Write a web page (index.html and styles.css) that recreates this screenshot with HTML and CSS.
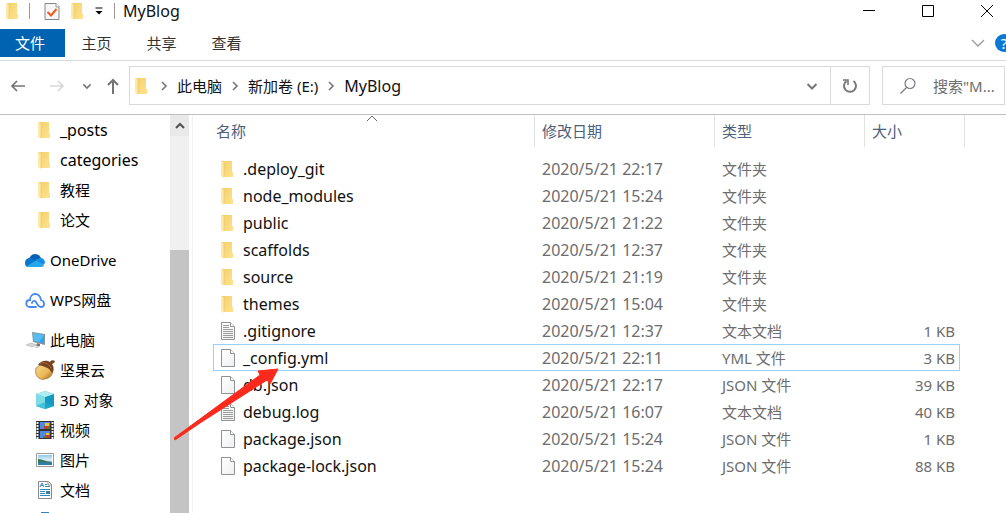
FILE: index.html
```html
<!DOCTYPE html>
<html lang="zh-CN">
<head>
<meta charset="utf-8">
<title>MyBlog</title>
<link rel="stylesheet" href="styles.css">
</head>
<body>
<svg class="defs" aria-hidden="true">
  <defs>
    <linearGradient id="gold" x1="0" y1="0" x2="1" y2="1"><stop offset="0" stop-color="#f3cf6b"/><stop offset="1" stop-color="#ffe38f"/></linearGradient>
    <linearGradient id="paper" x1="0" y1="0" x2="1" y2="1"><stop offset="0" stop-color="#fff"/><stop offset="1" stop-color="#eef0f1"/></linearGradient>
    <linearGradient id="nut" x1="0" y1="0" x2="1" y2="1"><stop offset="0" stop-color="#f8dc90"/><stop offset=".6" stop-color="#eab858"/><stop offset="1" stop-color="#a86016"/></linearGradient>
    <linearGradient id="sky" x1="0" y1="0" x2="0" y2="1"><stop offset="0" stop-color="#8cc6ee"/><stop offset=".5" stop-color="#e1f1f6"/><stop offset="1" stop-color="#286f87"/></linearGradient>
    <symbol id="folder" viewBox="0 0 14 18"><path d="M2 1h10v11h1v5H3z" fill="url(#gold)"/><path d="M1 1l3 2v15l-3-2z" fill="#ffe9a6"/><path d="M4 3v14" stroke="#e9c566" stroke-width=".6"/></symbol>
    <symbol id="file" viewBox="0 0 16 20"><path d="M1.500 1.500h9l4 4v13h-13z" fill="url(#paper)" stroke="#929292"/><path d="M10.500 1.500v4h4" fill="#fff" stroke="#929292"/></symbol>
    <symbol id="text" viewBox="0 0 16 20"><use href="#file"/><path d="M3 4.500h6M3 6.500h6M3 8.500h10M3 10.500h10M3 12.500h10M3 14.500h10M3 16.500h10" stroke="#9b9b9b"/></symbol>
    <symbol id="right" viewBox="0 0 8 10"><path d="M2 1l4 4-4 4" fill="none" stroke="#777" stroke-width="1.600"/></symbol>
    <symbol id="down" viewBox="0 0 12 10"><path d="M1.500 3l4.500 4.500L10.500 3" fill="none" stroke="currentColor" stroke-width="2"/></symbol>
  </defs>
</svg>

<div class="window">
  <header class="titlebar">
    <svg class="folder" aria-hidden="true"><use href="#folder"/></svg>
    <span class="divider gap-a"></span>
    <button class="plain gap-b" aria-label="属性"><svg width="16" height="20" viewBox="0 0 16 20"><path d="M1 2.500h11l3 3v13H1z" fill="#f5f6f7" stroke="#858585"/><path d="M12 2v4h3" fill="#fff" stroke="#999"/><path d="M3.500 11l3.500 3.500L12.500 8" fill="none" stroke="#ed5b20" stroke-width="2"/></svg></button>
    <button class="plain gap-c" aria-label="新建文件夹"><svg class="folder"><use href="#folder"/></svg></button>
    <button class="plain gap-d" aria-label="自定义"><svg width="8" height="8" viewBox="0 0 8 8"><path d="M.500 1h7" stroke="#000"/><path d="M.500 4h7L4 7.500z"/></svg></button>
    <span class="divider gap-d"></span>
    <h1 class="title latin">MyBlog</h1>
    <div class="caption-buttons">
      <button class="plain" aria-label="最小化"><svg width="14" height="14"><path d="M1 6.500h12" stroke="#000"/></svg></button>
      <button class="plain" aria-label="最大化"><svg width="14" height="14"><path d="M1.500 1.500h11v11h-11z" fill="none" stroke="#000"/></svg></button>
      <button class="plain" aria-label="关闭"><svg width="14" height="14"><path d="M1 1l12 12M13 1L1 13" stroke="#000"/></svg></button>
    </div>
  </header>

  <nav class="ribbon">
    <button class="tab active">文件</button>
    <button class="tab">主页</button>
    <button class="tab">共享</button>
    <button class="tab">查看</button>
    <button class="plain expand" aria-label="展开功能区"><svg width="14" height="10"><path d="M1 2l6 6 6-6" fill="none" stroke="#9a9a9a" stroke-width="1.300"/></svg></button>
    <button class="help" aria-label="帮助">?</button>
  </nav>

  <div class="navbar">
    <div class="arrows">
      <button class="plain" aria-label="后退"><svg width="16" height="14"><path d="M15 7H2M7 2L2 7l5 5" fill="none" stroke="#747474" stroke-width="1.700"/></svg></button>
      <button class="plain" aria-label="前进"><svg width="16" height="14"><path d="M1 7h13M9 2l5 5-5 5" fill="none" stroke="#d8d8d8" stroke-width="1.700"/></svg></button>
      <button class="plain recent" aria-label="最近的位置"><svg width="10" height="8" viewBox="0 0 12 10"><use href="#down"/></svg></button>
      <button class="plain" aria-label="上移"><svg width="14" height="18"><path d="M7 17V3M2 8l5-5 5 5" fill="none" stroke="#747474" stroke-width="2"/></svg></button>
    </div>
    <div class="address">
      <svg class="folder" aria-hidden="true"><use href="#folder"/></svg>
      <svg class="chevron" aria-hidden="true"><use href="#right"/></svg>
      <a class="crumb" href="#">此电脑</a>
      <svg class="chevron" aria-hidden="true"><use href="#right"/></svg>
      <a class="crumb" href="#">新加卷 (E:)</a>
      <svg class="chevron" aria-hidden="true"><use href="#right"/></svg>
      <a class="crumb latin" href="#">MyBlog</a>
      <button class="plain history" aria-label="以前的位置"><svg width="12" height="10"><use href="#down"/></svg></button>
      <button class="refresh" aria-label="刷新"><svg width="16" height="16"><path d="M11.500 3a6 6 0 1 1-7 0" fill="none" stroke="#777" stroke-width="2"/><path d="M1 2h5v5" fill="none" stroke="#777" stroke-width="1.600"/></svg></button>
    </div>
    <label class="search">
      <svg width="18" height="18" aria-hidden="true"><circle cx="11" cy="6.500" r="5" fill="none" stroke="#7b7b88" stroke-width="1.200"/><path d="M7.500 10.500L1.500 16.500" stroke="#7b7b88" stroke-width="1.200"/></svg>
      <input class="search-input" type="text" aria-label="搜索" placeholder='搜索"M...'>
    </label>
  </div>

  <div class="content">
    <nav class="tree">
      <div class="group">
        <a class="node child latin" href="#"><svg class="folder"><use href="#folder"/></svg>_posts</a>
        <a class="node child latin" href="#"><svg class="folder"><use href="#folder"/></svg>categories</a>
        <a class="node child" href="#"><svg class="folder"><use href="#folder"/></svg>教程</a>
        <a class="node child" href="#"><svg class="folder"><use href="#folder"/></svg>论文</a>
      </div>
      <div class="group">
        <a class="node" href="#"><svg class="icon" viewBox="0 0 20 20"><path d="M4 9C5 6 7 4 10 4c3 0 5 2 6 4l-7 5z" fill="#0860b4"/><path d="M0 13c0-3 2-5 5-5 2 0 4 1 6 3l-8 6c-2 0-3-2-3-4z" fill="#0875cf"/><path d="M10 10l5-2c3 0 5 2 5 5l-3 3z" fill="#168ee4"/><path d="M2 16l8-5c3 1 7 2 9 4 0 1-1 2-3 2H4c-1 0-2 0-2-1z" fill="#28a8ea"/></svg>OneDrive</a>
      </div>
      <div class="group">
        <a class="node" href="#"><svg class="icon" viewBox="0 0 20 20"><path d="M11 17H5c-5 0-5-7 0-7 0-8 10-8 11 0 4 1 4 7 0 7-3 0-3-2-5-5-1-2-4-1-4 1" fill="none" stroke="#4687f2" stroke-width="1.800" stroke-linecap="round"/></svg>WPS网盘</a>
      </div>
      <div class="group">
        <a class="node" href="#"><svg class="icon" viewBox="0 0 20 20"><path d="M7 2l13 2v11L8 12z" fill="#8b9298"/><path d="M8 3l11 2v8L9 11z" fill="#29a8f2"/><path d="M8 3l11 2-5 7-5-1z" fill="#56bdf6"/><path d="M12 13l3 1v2h-4z" fill="#777"/><path d="M1 15l5-2 6 2-5 2z" fill="#d4d7d9" stroke="#a8adb0" stroke-width=".5"/><path d="M10 17l4-1 1 1-4 1z" fill="#b9bcbe"/></svg>此电脑</a>
        <a class="node child" href="#"><svg class="icon" viewBox="0 0 20 20"><path d="M1 8c-2 7 3 13 9 11 6-1 8-5 8-10L8 3z" fill="url(#nut)" stroke="#965b1e" stroke-width=".6"/><path d="M3 5c3-5 9-5 12-3 1-2 3-2 5-1l-1 2-2 1c3 4 1 8 0 9C14 7 8 6 3 5z" fill="#76421f"/><path d="M5 4c4-3 8-1 11 4" fill="none" stroke="#a96c3e"/></svg>坚果云</a>
        <a class="node child" href="#"><svg class="icon" viewBox="0 0 20 20"><path d="M1 4l9-3 9 3v12l-9 3-9-3z" fill="#35bad1"/><path d="M1 4l9 3v12l-9-3z" fill="#7ddde5"/><path d="M10 7l9-3v12l-9 3z" fill="#159bc1"/><path d="M1 4l9-3 9 3-9 3z" fill="#b0edf0"/><path d="M1 16l9-4 9 4-9 3z" fill="#22b0d0" opacity=".6"/></svg>3D 对象</a>
        <a class="node child" href="#"><svg class="icon" viewBox="0 0 20 20"><path d="M1 1h18v18H1z" fill="#333"/><path d="M2.500 2v17M17.500 2v17" stroke="#eee" stroke-width="2" stroke-dasharray="2 1"/><path d="M5 2h10v7H5zM5 11h10v7H5z" fill="#5289e0"/><path d="M10 3h4v3h-4zM11 13h3v2h-3z" fill="#f3c432"/><path d="M9 6h6v3H9zM10 15h5v3h-5z" fill="#c43b32"/><path d="M12 7h2v2h-2zM8 16h3v2H8z" fill="#438a31"/></svg>视频</a>
        <a class="node child" href="#"><svg class="icon" viewBox="0 0 20 20"><path d="M1.500 3.500h17v13h-17z" fill="#fff" stroke="#999"/><path d="M3 5h14v10H3z" fill="url(#sky)"/><path d="M3 9c5 0 8 3 14 3v3H3z" fill="#32795e"/><path d="M3 13c5-2 9 1 14-1v3H3z" fill="#317fac"/></svg>图片</a>
        <a class="node child" href="#"><svg class="icon" viewBox="0 0 20 20"><path d="M3.500 1.500h10l3 3v14h-13z" fill="#fff" stroke="#8a8a8a"/><path d="M13 2v3h3" fill="none" stroke="#8a8a8a"/><path d="M5 7l2-4 2 4M6 5.500h2M10 4.500h2M10 6.500h5M5 9.500h10M5 11.500h5M5 13.500h5M5 15.500h10" fill="none" stroke="#2d8ac2"/><path d="M11 11h4v3h-4z" fill="#397fa8"/></svg>文档</a>
        <a class="node child" href="#" aria-label="下载"><svg class="icon" viewBox="0 0 20 20"><path d="M6 2h8v8h4l-8 8-8-8h4z" fill="#3a80bd"/></svg></a>
      </div>
    </nav>
    <div class="scrollbar">
      <button class="scroll-up" aria-label="向上滚动"><svg width="12" height="9"><path d="M2 7l4-4 4 4" fill="none" stroke="#505050" stroke-width="2"/></svg></button>
      <div class="thumb"></div>
    </div>

    <main class="files">
      <table class="list">
        <colgroup><col class="c-name"><col class="c-date"><col class="c-type"><col class="c-size"><col class="c-end"></colgroup>
        <thead>
          <tr>
            <th>名称<svg class="sort" width="12" height="7" aria-hidden="true"><path d="M1 6l5-5 5 5" fill="none" stroke="#666"/></svg></th>
            <th>修改日期</th><th>类型</th><th colspan="2">大小</th>
          </tr>
        </thead>
        <tbody>
          <tr><td><div class="name"><svg class="folder"><use href="#folder"/></svg>.deploy_git</div></td><td>2020/5/21 22:17</td><td>文件夹</td><td></td></tr>
          <tr><td><div class="name"><svg class="folder"><use href="#folder"/></svg>node_modules</div></td><td>2020/5/21 15:24</td><td>文件夹</td><td></td></tr>
          <tr><td><div class="name"><svg class="folder"><use href="#folder"/></svg>public</div></td><td>2020/5/21 21:22</td><td>文件夹</td><td></td></tr>
          <tr><td><div class="name"><svg class="folder"><use href="#folder"/></svg>scaffolds</div></td><td>2020/5/21 12:37</td><td>文件夹</td><td></td></tr>
          <tr><td><div class="name"><svg class="folder"><use href="#folder"/></svg>source</div></td><td>2020/5/21 21:19</td><td>文件夹</td><td></td></tr>
          <tr><td><div class="name"><svg class="folder"><use href="#folder"/></svg>themes</div></td><td>2020/5/21 15:04</td><td>文件夹</td><td></td></tr>
          <tr><td><div class="name"><svg class="file"><use href="#text"/></svg>.gitignore</div></td><td>2020/5/21 12:37</td><td>文本文档</td><td>1 KB</td></tr>
          <tr class="selected"><td><div class="name"><svg class="file"><use href="#file"/></svg>_config.yml</div></td><td>2020/5/21 22:11</td><td>YML 文件</td><td>3 KB</td></tr>
          <tr><td><div class="name"><svg class="file"><use href="#file"/></svg>db.json</div></td><td>2020/5/21 22:17</td><td>JSON 文件</td><td>39 KB</td></tr>
          <tr><td><div class="name"><svg class="file"><use href="#text"/></svg>debug.log</div></td><td>2020/5/21 16:07</td><td>文本文档</td><td>40 KB</td></tr>
          <tr><td><div class="name"><svg class="file"><use href="#file"/></svg>package.json</div></td><td>2020/5/21 15:24</td><td>JSON 文件</td><td>1 KB</td></tr>
          <tr><td><div class="name"><svg class="file"><use href="#file"/></svg>package-lock.json</div></td><td>2020/5/21 15:24</td><td>JSON 文件</td><td>88 KB</td></tr>
        </tbody>
      </table>
    </main>
  </div>
  <svg class="pointer" viewBox="0 0 106 74" aria-hidden="true"><path d="M0 70L26 51 86 7 84 3 104 1 96 16 93 12 26 55 1 72z" fill="#fc2a1c" stroke="#fc2a1c"/></svg>
</div>
</body>
</html>
```

FILE: styles.css
```css
* { box-sizing: border-box; }

body {
  margin: 0;
  overflow: hidden;
  background: #fff;
  color: #111;
  font: 15px/20px "Noto Sans", "Noto Sans CJK SC", sans-serif;
}

button, input { font: inherit; color: inherit; }
a { color: inherit; text-decoration: none; }
svg { display: block; flex: none; }
.defs { position: absolute; width: 0; height: 0; }

.window {
  position: relative;
  display: flex;
  flex-direction: column;
  height: 100vh;
}

.plain {
  display: flex;
  align-items: center;
  justify-content: center;
  padding: 0;
  border: 0;
  background: none;
}

.folder { width: 14px; height: 18px; }
.file { width: 16px; height: 20px; }
.icon { width: 20px; height: 20px; }

/* Title bar */
.titlebar {
  display: flex;
  align-items: center;
  height: 21px;
  margin-bottom: 8px;
  padding: 0 12px 0 5px;
}
.divider { width: 1px; height: 16px; background: #999; }
.gap-a { margin-left: 10px; }
.gap-b { margin-left: 14px; }
.gap-c { margin-left: 10px; }
.gap-d { margin-left: 11px; }
.title { margin: 0 0 0 8px; font-weight: 400; }
.caption-buttons { display: flex; gap: 45px; margin-left: auto; }

/* Ribbon */
.ribbon {
  display: flex;
  align-items: center;
  height: 32px;
  padding-bottom: 3px;
  border-bottom: 1px solid #dadbdc;
  overflow: hidden;
}
.tab {
  width: 65px;
  height: 28px;
  padding: 0 2px 0 0;
  border: 0;
  background: none;
  color: #333;
}
.tab.active { padding-right: 5px; background: #0063b1; color: #fff; }
.expand { margin-left: auto; }
.help {
  flex: none;
  width: 18px;
  height: 18px;
  margin: 0 -7px 0 10px;
  padding: 0;
  border: 0;
  border-radius: 50%;
  background: #0a78d4;
  color: #fff;
  font-size: 15px;
  line-height: 18px;
}

/* Navigation bar */
.navbar {
  display: flex;
  gap: 12px;
  height: 54px;
  padding: 5px 1px 9px 10px;
  border-bottom: 1px solid #bfbfbf;
}
.arrows { display: flex; align-items: center; width: 107px; gap: 23px; color: #777; }
.arrows .recent { margin: 0 -9px 0 -6px; }
.address {
  display: flex;
  flex: 1;
  align-items: center;
  height: 39px;
  padding-left: 4px;
  border: 1px solid #d9d9d9;
}
.chevron { width: 8px; height: 10px; margin: 0 9px; }
.address .folder + .chevron { margin-left: 12px; }
.history { margin-left: auto; padding: 0 12px; color: #777; }
.refresh {
  display: flex;
  align-items: center;
  justify-content: center;
  align-self: stretch;
  width: 39px;
  padding: 0;
  border: 0;
  border-left: 1px solid #d9d9d9;
  background: none;
}
.search {
  display: flex;
  align-items: center;
  gap: 16px;
  width: 123px;
  height: 39px;
  padding-left: 16px;
  border: 1px solid #d9d9d9;
}
.search-input {
  flex: 1;
  min-width: 0;
  padding: 0;
  border: 0;
  outline: 0;
  background: none;
}
.search-input::placeholder { color: #6d6d6d; opacity: 1; }

/* Body */
.content { display: flex; flex: 1; min-height: 0; overflow: hidden; }
.tree {
  display: flex;
  flex: none;
  flex-direction: column;
  gap: 10px;
  width: 170px;
  overflow: hidden;
}
.node {
  display: flex;
  align-items: center;
  gap: 5px;
  height: 30px;
  padding-left: 25px;
  color: #000;
}
.node.child { padding-left: 35px; }
.node .folder { margin: 0 4px 0 2px; }

.scrollbar {
  display: flex;
  flex: none;
  flex-direction: column;
  width: 23px;
  padding-right: 3px;
  border-right: 1px solid #f2f2f2;
}
.scroll-up {
  display: flex;
  align-items: center;
  justify-content: center;
  height: 21px;
  padding: 0;
  border: 0;
  background: #e9e9e9;
}
.thumb {
  flex: 1;
  border-top: 114px solid #f0f0f0;
  background: #c4c4c4;
}

.files { flex: 1; min-width: 0; padding-left: 20px; }
.list { width: 752px; table-layout: fixed; border-collapse: separate; border-spacing: 0; }
.c-name { width: 322px; }
.c-date { width: 180px; }
.c-type { width: 150px; }
.c-size { width: 95px; }
.c-end { width: 5px; }

.list th {
  position: relative;
  height: 32px;
  padding: 0 7px;
  border-right: 1px solid #e2e2e2;
  color: #4c607a;
  font-weight: 400;
  text-align: left;
}
.list th:first-child { padding-left: 3px; }
.sort { position: absolute; top: 0; left: 50%; margin-left: -8px; }

.list tbody::before { content: ""; display: block; height: 8px; }
.list td {
  height: 27px;
  padding: 0 7px;
  color: #6d6d6d;
  white-space: nowrap;
}
.list td:nth-child(4) { padding-right: 5px; text-align: right; }
.name { display: flex; align-items: center; gap: 7px; color: #111; }
.name .folder { margin-right: 2px; }
.latin, .name, .list td:nth-child(2) { font-size: 16px; }
.selected td { box-shadow: inset 0 1px #99d1ff, inset 0 -1px #99d1ff; }
.selected td:first-child { box-shadow: inset 0 1px #99d1ff, inset 0 -1px #99d1ff, inset 1px 0 #99d1ff; }
.selected td:nth-child(4) { box-shadow: inset 0 1px #99d1ff, inset 0 -1px #99d1ff, inset -1px 0 #99d1ff; }

/* Annotation arrow over the list */
.pointer { position: absolute; left: 174px; top: 368px; width: 106px; height: 74px; pointer-events: none; }
```
